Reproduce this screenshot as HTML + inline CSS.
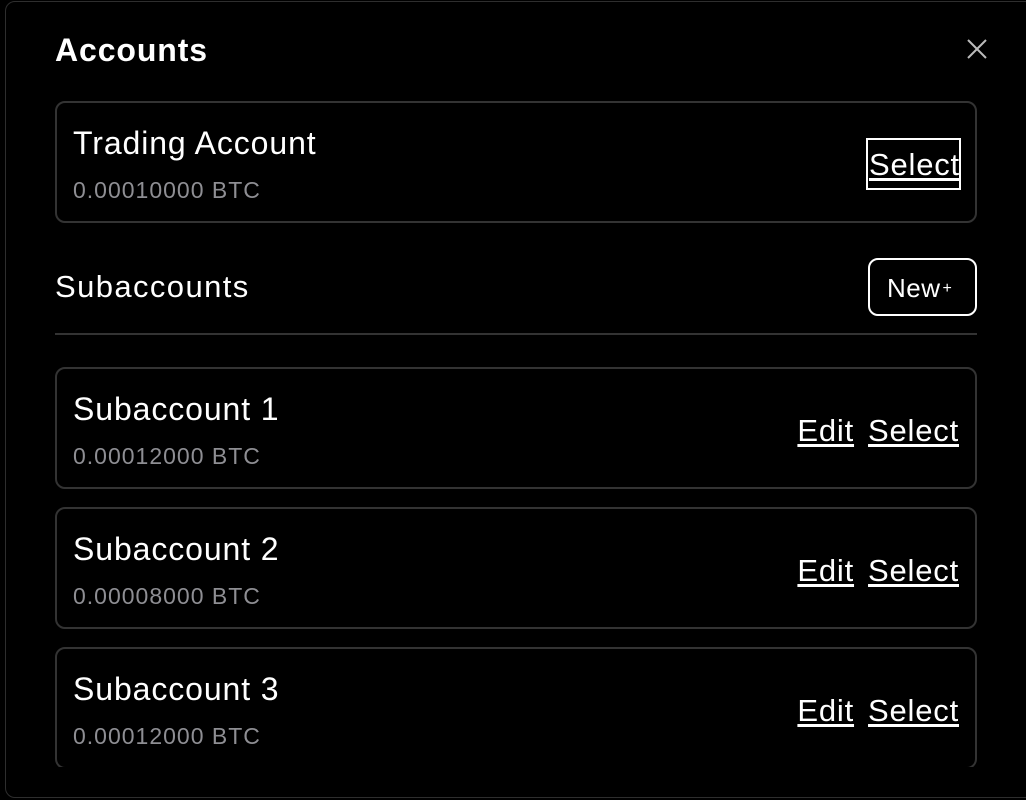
<!DOCTYPE html>
<html><head><style>
*{margin:0;padding:0;box-sizing:border-box}
body{width:1026px;height:800px;background:#000;font-family:"Liberation Sans",sans-serif;color:#fff;position:relative;overflow:hidden}
.modal{position:absolute;left:5px;top:1px;width:1030px;height:797px;border:1px solid #2e2e2e;border-radius:10px;background:#000}
.title{position:absolute;left:55px;top:32px;font-size:32px;font-weight:bold;letter-spacing:0.9px}
.close{position:absolute;left:966px;top:38px}
.card{position:absolute;left:55px;width:922px;height:122px;border:2px solid #333;border-radius:10px}
.name{position:absolute;left:16px;top:22px;font-size:32px;letter-spacing:0.9px}
.bal{position:absolute;left:16px;top:74px;font-size:23px;color:#8e8e93;letter-spacing:1px}
.acts{position:absolute;right:16px;top:44px;font-size:31px;letter-spacing:0.8px}
.acts span{text-decoration:underline;text-underline-offset:3px;margin-left:14px}
.sub{position:absolute;left:55px;top:269px;font-size:31px;letter-spacing:1.4px}
.new{position:absolute;left:868px;top:258px;width:109px;height:58px;border:2px solid #fff;border-radius:10px;font-size:26px;padding:13px 0 0 17px;letter-spacing:0.5px}
.new small{font-size:16px;vertical-align:4px;margin-left:2px}
.div{position:absolute;left:55px;top:333px;width:922px;height:2px;background:#333}
.clip{position:absolute;left:0;top:0;width:1026px;height:767px;overflow:hidden}
</style></head><body>
<div class="modal"></div>
<div class="title">Accounts</div>
<svg class="close" width="22" height="22" viewBox="0 0 22 22"><path d="M2 2L20 20M20 2L2 20" stroke="#bbb" stroke-width="2"/></svg>
<div class="card" style="top:101px"><div class="name">Trading Account</div><div class="bal">0.00010000 BTC</div>
<div class="acts" style="top:35px;right:14px;border:2px solid #fff;padding:0 0 0 1px;line-height:50px;height:52px;width:95px"><span style="margin:0">Select</span></div></div>
<div class="sub">Subaccounts</div>
<div class="new">New<small>+</small></div>
<div class="div"></div>
<div class="clip">
<div class="card" style="top:367px"><div class="name">Subaccount 1</div><div class="bal">0.00012000 BTC</div><div class="acts"><span>Edit</span><span>Select</span></div></div>
<div class="card" style="top:507px"><div class="name">Subaccount 2</div><div class="bal">0.00008000 BTC</div><div class="acts"><span>Edit</span><span>Select</span></div></div>
<div class="card" style="top:647px"><div class="name">Subaccount 3</div><div class="bal">0.00012000 BTC</div><div class="acts"><span>Edit</span><span>Select</span></div></div>
</div>
</body></html>
